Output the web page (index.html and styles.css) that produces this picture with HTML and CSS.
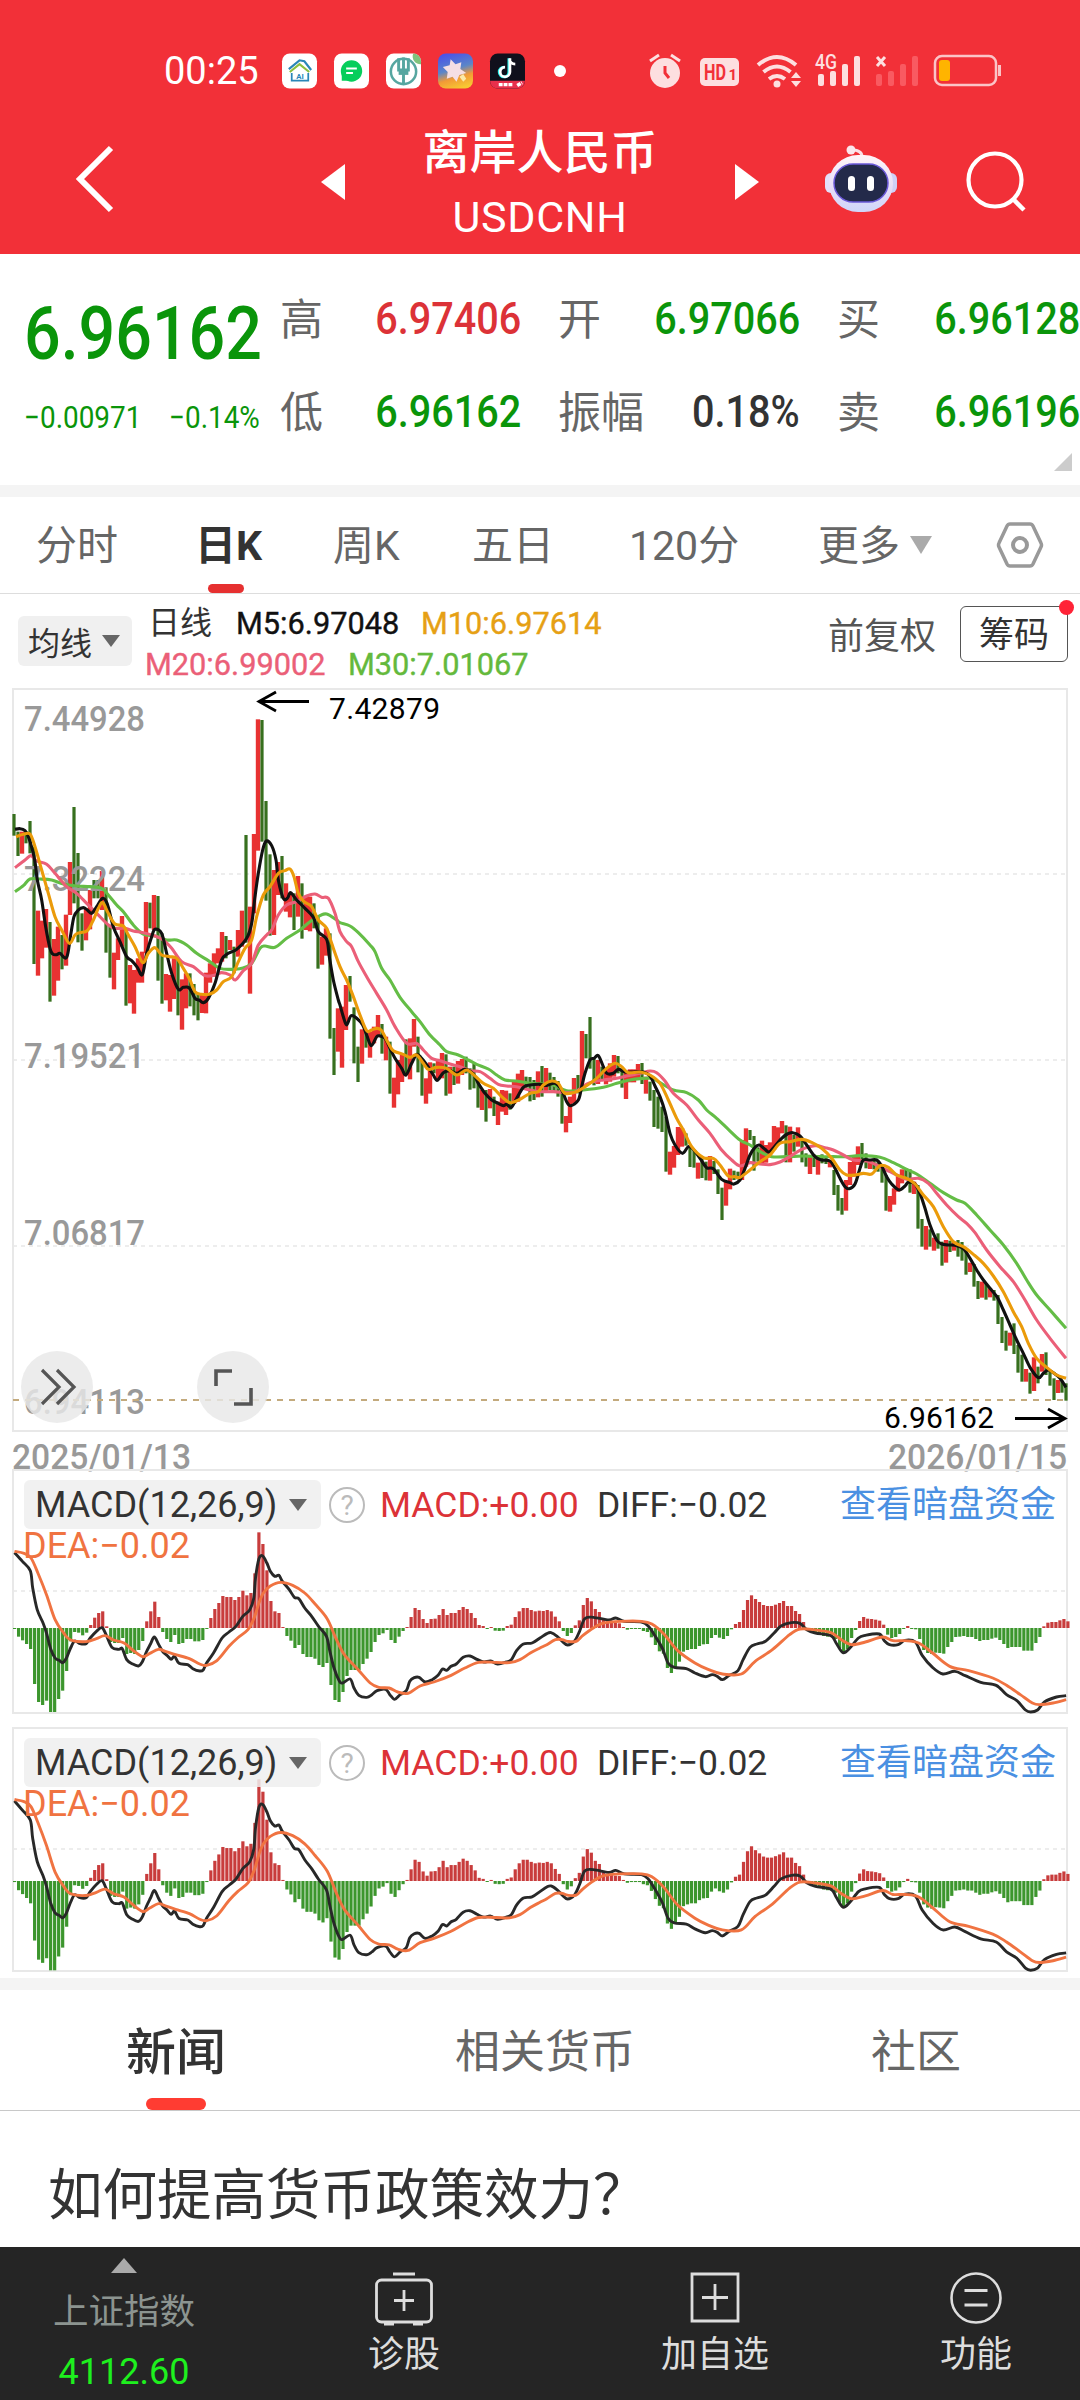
FILE: index.html
```html
<!DOCTYPE html>
<html lang="zh-CN">
<head>
    <meta charset="UTF-8">
    <meta name="viewport" content="width=device-width, initial-scale=1.0">
    <title>离岸人民币 USDCNH</title>
    <link rel="stylesheet" href="styles.css">
</head>
<body>
    <header class="header">
        <div class="status-bar">
            <span class="clock">00:25</span>
            <div class="app-icons">
                <svg class="app" viewBox="0 0 36 36">
                    <rect width="36" height="36" rx="8" fill="#fff"/>
                    <path d="M7 16 18 7l5 1 7 9" fill="none" stroke="#2a86b8" stroke-width="2.2"/>
                    <path d="M8 19 18 11l10 8" fill="none" stroke="#8cbf3f" stroke-width="2.2"/>
                    <path d="M10 20v8h17v-8" fill="none" stroke="#2a86b8" stroke-width="1.8"/>
                    <text x="18.500" y="26" font-size="8" font-weight="bold" fill="#2a86b8" text-anchor="middle">AI</text>
                </svg>
                <svg class="app" viewBox="0 0 36 36">
                    <rect width="36" height="36" rx="8" fill="#fff"/>
                    <circle cx="18" cy="18" r="11" fill="#06ce5b"/>
                    <path d="M8 20v8h9z" fill="#06ce5b"/>
                    <path d="M12.500 15.500h11M12.500 20h7" stroke="#fff" stroke-width="2"/>
                </svg>
                <svg class="app" viewBox="0 0 36 36">
                    <rect width="36" height="36" rx="8" fill="#fff"/>
                    <path d="M28 0a8 8 0 0 1 8 8v3a8 8 0 0 1-8-11z" fill="#7fc27c"/>
                    <circle cx="18" cy="18.500" r="13" fill="none" stroke="#56a6a0" stroke-width="2.600"/>
                    <path d="M13 5v12h10V5M18 4v28" fill="none" stroke="#56a6a0" stroke-width="3"/>
                    <path d="M13 20h10" stroke="#56a6a0" stroke-width="4"/>
                </svg>
                <svg class="app" viewBox="0 0 36 36">
                    <defs>
                        <linearGradient id="sky" x1=".3" y1="0" x2=".6" y2="1">
                            <stop offset="0" stop-color="#4a53e8"/>
                            <stop offset=".45" stop-color="#5b86c8"/>
                            <stop offset=".7" stop-color="#f29a36"/>
                            <stop offset="1" stop-color="#f7c832"/>
                        </linearGradient>
                    </defs>
                    <rect width="36" height="36" rx="8" fill="url(#sky)"/>
                    <path d="m13 6 5 5 6-2-1 7 6 4-7 2-3 7-4-5-6 2 1-7-5-5 7-2z" fill="#f5dfe4"/>
                    <path d="m22 24 4-3 3 5-3 3z" fill="#fbe9a8"/>
                </svg>
                <svg class="app" viewBox="0 0 36 36">
                    <rect width="36" height="36" rx="8" fill="#10101c"/>
                    <path d="M0 28h36a8 8 0 0 1-8 8H8a8 8 0 0 1-8-8z" fill="#e8304c"/>
                    <path d="M19.500 5v14a5 5 0 1 1-5-5" fill="none" stroke="#25f4ee" stroke-width="3"/>
                    <path d="M20.500 5v14a5 5 0 1 1-5-5M20 6q1 5 6 5" fill="none" stroke="#fff" stroke-width="2.800"/>
                    <path d="M9 32h15M28 33l5-3" stroke="#fff" stroke-width="3.500" stroke-dasharray="4 1"/>
                </svg>
            </div>
            <i class="more-dot"></i>
            <svg class="system-icons" width="354" height="36" viewBox="0 0 354 36">
                <g fill="#fddfe0">
                    <circle cx="17" cy="20" r="15"/>
                    <path d="m2 8 9-6M32 8l-9-6" stroke="#fddfe0" stroke-width="3"/>
                    <path d="M17 13v7l4 5" fill="none" stroke="#f23038" stroke-width="3"/>
                    <rect x="52" y="5" width="39" height="28" rx="5"/>
                    <text x="56" y="27" class="hd" textLength="22" lengthAdjust="spacingAndGlyphs">HD</text>
                    <text x="80.500" y="27" class="hd-small">1</text>
                    <circle cx="129" cy="31" r="3.500"/>
                    <path d="M110 12q19-16 38 0M115.500 19q13.500-11 27 0M121 26q8-6 16 0" fill="none" stroke="#fddfe0" stroke-width="4"/>
                    <path d="m143 25 5-6 5 6zM143 28h10l-5 6z"/>
                    <rect x="170" y="21" width="6" height="12" rx="2"/>
                    <rect x="182" y="18" width="6" height="15" rx="2"/>
                    <rect x="194" y="11" width="6" height="22" rx="2"/>
                    <rect x="206" y="3" width="6" height="30" rx="2"/>
                    <text x="167" y="16" class="net" textLength="22" lengthAdjust="spacingAndGlyphs">4G</text>
                </g>
                <path d="m229 4 8 9m0-9-8 9" stroke="#fddfe0" stroke-width="3"/>
                <g fill="#f95a61">
                    <rect x="228" y="21" width="6" height="12" rx="2"/>
                    <rect x="240" y="18" width="6" height="15" rx="2"/>
                    <rect x="252" y="11" width="6" height="22" rx="2"/>
                    <rect x="264" y="3" width="6" height="30" rx="2"/>
                </g>
                <rect x="287" y="3" width="61" height="29" rx="7" fill="none" stroke="#fbc4c7" stroke-width="2.500"/>
                <rect x="291" y="7" width="11" height="21" rx="3" fill="#ffb400"/>
                <path d="M351.500 12v11" stroke="#fbc4c7" stroke-width="3"/>
            </svg>
        </div>
        <div class="title-bar">
            <svg class="back" viewBox="0 0 38 66"><path d="M35 2 4 33l31 31" fill="none" stroke="#fff" stroke-width="6"/></svg>
            <svg class="step prev" viewBox="0 0 24 36"><path d="M24 0v36L0 18z" fill="#fff"/></svg>
            <div class="title">
                <div class="title-name">离岸人民币</div>
                <div class="title-code">USDCNH</div>
            </div>
            <svg class="step next" viewBox="0 0 24 36"><path d="M0 0v36l24-18z" fill="#fff"/></svg>
            <svg class="robot" viewBox="0 0 72 68">
                <defs>
                    <linearGradient id="shell" x1="0" y1="0" x2="0" y2="1">
                        <stop offset="0" stop-color="#fff5f8"/>
                        <stop offset=".6" stop-color="#e6dcf8"/>
                        <stop offset="1" stop-color="#cfd6fa"/>
                    </linearGradient>
                </defs>
                <path d="M37 12q0-7-10-7" fill="none" stroke="#fbdfe6" stroke-width="3"/>
                <circle cx="26" cy="5" r="4.500" fill="#fbe6ec"/>
                <rect x="0" y="28" width="12" height="20" rx="6" fill="#e3e0fa"/>
                <rect x="60" y="28" width="12" height="20" rx="6" fill="#cfd0f8"/>
                <rect x="4" y="10" width="64" height="57" rx="29" fill="url(#shell)"/>
                <rect x="9" y="19" width="54" height="38" rx="19" fill="#232a4a" stroke="#6a58d8" stroke-width="1.500"/>
                <rect x="23" y="31" width="7" height="15" rx="3.500" fill="#fff"/>
                <rect x="42" y="31" width="7" height="15" rx="3.500" fill="#fff"/>
            </svg>
            <svg class="search" viewBox="0 0 62 62"><circle cx="29" cy="29" r="26.500" fill="none" stroke="#fff" stroke-width="4.200"/><path d="m47 48 11 11" stroke="#fff" stroke-width="4.500"/></svg>
        </div>
    </header>

    <section class="quote">
        <div class="quote-main">
            <div class="price"><span>6.96162</span></div>
            <div class="change"><span>−0.00971</span><span>−0.14%</span></div>
        </div>
        <div class="quote-grid">
            <span class="key">高</span><span class="val up">6.97406</span>
            <span class="key">开</span><span class="val down">6.97066</span>
            <span class="key">买</span><span class="val down">6.96128</span>
            <span class="key">低</span><span class="val down">6.96162</span>
            <span class="key">振幅</span><span class="val">0.18%</span>
            <span class="key">卖</span><span class="val down">6.96196</span>
        </div>
        <i class="corner"></i>
    </section>

    <nav class="period-tabs">
        <span class="period p1">分时</span>
        <span class="period p2 active">日K</span>
        <span class="period p3">周K</span>
        <span class="period p4">五日</span>
        <span class="period p5">120分</span>
        <span class="period p6">更多</span>
        <i class="caret caret-light"></i>
        <svg class="setting" viewBox="0 0 48 46"><path d="M14 2h20q2 0 3 2l8 17q1 2 0 4l-8 17q-1 2-3 2H14q-2 0-3-2L3 25q-1-2 0-4l8-17q1-2 3-2z" fill="none" stroke="#999" stroke-width="3.500"/><circle cx="24" cy="23" r="7" fill="none" stroke="#999" stroke-width="4"/></svg>
    </nav>

    <section class="ma-bar">
        <div class="select ma-select">均线<i class="caret"></i></div>
        <div class="ma-values">
            <div class="ma-line"><span class="ma-day">日线</span><span class="num m5">M5:6.97048</span><span class="num m10">M10:6.97614</span></div>
            <div class="ma-line"><span class="num m20">M20:6.99002</span><span class="num m30">M30:7.01067</span></div>
        </div>
        <span class="adjust">前复权</span>
        <span class="chips">筹码</span>
    </section>

    <section class="kline">
        <svg id="kline" width="1080" height="786" viewBox="0 684 1080 786"></svg>
        <div class="round-btn"><svg viewBox="0 0 72 72"><path d="m21 19 17 17-17 17M36 19l17 17-17 17" fill="none" stroke="#555" stroke-width="3.200"/></svg></div>
        <div class="round-btn full"><svg viewBox="0 0 72 72"><path d="M19 35V20h16M54 37v16H37" fill="none" stroke="#555" stroke-width="3.600"/></svg></div>
    </section>

    <section class="macd">
        <svg class="macd-chart" data-scale="1" width="1056" height="245" viewBox="12 -159 1056 245"></svg>
        <div class="macd-head">
            <div class="select macd-select"><span>MACD(12,26,9)</span><i class="caret"></i></div>
            <i class="help">?</i>
            <span class="macd-val">MACD:+0.00</span>
            <span class="diff-val">DIFF:−0.02</span>
            <a class="link">查看暗盘资金</a>
        </div>
        <span class="dea-val">DEA:−0.02</span>
    </section>
    <section class="macd second">
        <svg class="macd-chart" data-scale="1.063" width="1056" height="245" viewBox="12 -154 1056 245"></svg>
        <div class="macd-head">
            <div class="select macd-select"><span>MACD(12,26,9)</span><i class="caret"></i></div>
            <i class="help">?</i>
            <span class="macd-val">MACD:+0.00</span>
            <span class="diff-val">DIFF:−0.02</span>
            <a class="link">查看暗盘资金</a>
        </div>
        <span class="dea-val">DEA:−0.02</span>
    </section>

    <nav class="news-tabs">
        <span class="news-tab active">新闻</span>
        <span class="news-tab">相关货币</span>
        <span class="news-tab">社区</span>
    </nav>
    <h2 class="headline">如何提高货币政策效力？</h2>

    <footer class="toolbar">
        <div class="index">
            <i class="caret-up"></i>
            <span class="index-name">上证指数</span>
            <span class="index-value">4112.60</span>
        </div>
        <div class="tool t1">
            <svg width="58" height="54" viewBox="0 0 58 54"><g fill="none" stroke="#ddd" stroke-width="2.800"><rect x="1.500" y="8" width="55" height="42" rx="5"/><path d="M18 2h22M29 18v21M19 28.500h20"/><path d="M9 52h10M38 52h10"/></g></svg>
            <span>诊股</span>
        </div>
        <div class="tool t2">
            <svg width="58" height="54" viewBox="0 0 58 54"><path d="M6 2h46v47H6zM29 12v26M16 25.500h26" fill="none" stroke="#ddd" stroke-width="2.800"/></svg>
            <span>加自选</span>
        </div>
        <div class="tool t3">
            <svg width="58" height="54" viewBox="0 0 58 54"><circle cx="29" cy="26" r="24.500" fill="none" stroke="#ddd" stroke-width="2.600"/><path d="M17.500 18.500h23M17.500 33h23" stroke="#ddd" stroke-width="2.800"/></svg>
            <span>功能</span>
        </div>
    </footer>
    <script src="chart.js"></script>
</body>
</html>
```

FILE: styles.css
```css
* {
    box-sizing: border-box;
}

body {
    margin: 0;
    width: 1080px;
    height: 2400px;
    overflow: hidden;
    background: #fff;
    color: #333;
    font-family: Roboto, "Noto Sans CJK SC", sans-serif;
    display: flex;
    flex-direction: column;
}

i {
    font-style: normal;
}

svg {
    display: block;
    flex: none;
    overflow: visible;
}

span {
    white-space: nowrap;
    flex: none;
}

/* header */
.header {
    height: 254px;
    flex: none;
    background: #f23038;
    color: #fff;
}

.status-bar {
    height: 126px;
    padding: 53px 0 0 164px;
    display: flex;
    align-items: flex-start;
}

.clock {
    width: 118px;
    font-size: 38px;
    line-height: 36px;
}

.app-icons {
    display: flex;
    gap: 17px;
}

.app {
    width: 35px;
    height: 36px;
}

.more-dot {
    width: 12px;
    height: 12px;
    margin: 12px 0 0 29px;
    border-radius: 50%;
    background: #fff;
}

.system-icons {
    margin-left: 82px;
}

.hd {
    font: bold 22px Roboto, sans-serif;
    fill: #f23038;
}

.hd-small {
    font: bold 15px Roboto, sans-serif;
    fill: #f23038;
}

.net {
    font: 500 21px Roboto, sans-serif;
}

.title-bar {
    display: flex;
    height: 128px;
    align-items: flex-start;
}

.back {
    width: 38px;
    height: 66px;
    margin: 20px 0 0 76px;
}

.step {
    width: 24px;
    height: 36px;
    margin-top: 38px;
}

.prev {
    margin-left: 207px;
}

.title {
    width: 390px;
    text-align: center;
    font-weight: 500;
}

.title-name {
    font-size: 47px;
    line-height: 54px;
}

.title-code {
    font-size: 43px;
    font-weight: 400;
    line-height: 50px;
    margin-top: 12px;
    letter-spacing: 0.7px;
}

.robot {
    width: 72px;
    height: 68px;
    margin: 19px 0 0 66px;
}

.search {
    width: 62px;
    height: 62px;
    margin: 25px 0 0 69px;
}

/* quote */
.quote {
    position: relative;
    height: 243px;
    flex: none;
    display: flex;
    border-bottom: 12px solid #f4f4f4;
}

.quote-main {
    width: 280px;
    flex: none;
    padding: 34px 0 0 24px;
    color: #0a950a;
}

.price {
    height: 90px;
    font-size: 75px;
    line-height: 90px;
    font-weight: 500;
}

.price span,
.change span,
.val,
.num {
    display: inline-block;
    transform: scaleX(.86);
    transform-origin: left;
}

.change {
    display: flex;
    font-size: 31px;
    line-height: 36px;
    margin-top: 22px;
}

.change span {
    width: 145px;
    transform: scaleX(.9);
}

.quote-grid {
    display: grid;
    grid-template-columns: 96px 145px 134px 145px 135px 145px;
    grid-template-rows: 93px 93px;
    align-items: center;
    padding-top: 18px;
    height: 204px;
}

.key {
    color: #666;
    font-size: 43px;
    margin-top: -6px;
}

.key:nth-child(4n + 3),
.key:nth-child(5),
.key:nth-child(9) {
    padding-left: 37px;
}

.key:nth-child(7) {
    padding-left: 0;
}

.val {
    font-size: 44px;
    font-weight: 500;
    justify-self: end;
    transform: scaleX(.9);
    transform-origin: right;
}

.up {
    color: #dc3237;
}

.down {
    color: #0a950a;
}

.corner {
    position: absolute;
    right: 8px;
    bottom: 14px;
    border-left: 18px solid transparent;
    border-bottom: 18px solid #ccc;
}

/* period tabs */
.period-tabs {
    height: 97px;
    flex: none;
    display: flex;
    align-items: center;
    border-bottom: 1px solid #ddd;
    color: #666;
    font-size: 41px;
}

.period {
    position: relative;
    height: 96px;
    line-height: 99px;
}

.p1 { margin-left: 36px; width: 159px; }
.p2 { width: 138px; }
.p3 { width: 139px; }
.p4 { width: 157px; }
.p5 { width: 189px; }
.p6 { width: 92px; }

.period.active {
    color: #333;
    font-weight: bold;
}

.period.active::after {
    content: "";
    position: absolute;
    left: 13px;
    bottom: 0;
    width: 36px;
    height: 9px;
    border-radius: 5px;
    background: #e63030;
}

.caret {
    border: 9px solid transparent;
    border-top: 12px solid #666;
    border-bottom: 0;
}

.caret-light {
    border-width: 18px 11px 0;
    border-top-color: #aaa;
}

.setting {
    width: 48px;
    height: 46px;
    margin-left: 64px;
}

/* MA row */
.ma-bar {
    height: 90px;
    flex: none;
    padding-left: 18px;
    display: flex;
    align-items: flex-start;
}

.select {
    display: flex;
    align-items: center;
    justify-content: space-between;
    border-radius: 6px;
    background: #f0f0f0;
    color: #333;
}

.ma-select {
    width: 114px;
    height: 50px;
    margin-top: 22px;
    padding: 0 12px 0 10px;
    font-size: 32px;
}

.ma-values {
    width: 697px;
    padding: 9px 0 0 13px;
}

.ma-line {
    display: flex;
    height: 41px;
    line-height: 41px;
    font-size: 32px;
}

.ma-day {
    width: 91px;
    padding-left: 3px;
    font-size: 32px;
    line-height: 40px;
}

.num {
    transform: scaleX(.96);
    font-size: 32px;
    -webkit-text-stroke: .4px currentColor;
}

.m5 { color: #111; width: 185px; }
.m10 { color: #e6a014; }
.m20 { color: #eb5f78; width: 203px; }
.m30 { color: #64b93c; }

.adjust {
    width: 132px;
    margin-top: 18px;
    font-size: 36px;
    line-height: 51px;
    color: #555;
}

.ma-bar .adjust {
    margin-left: -1px;
}

.chips {
    position: relative;
    width: 108px;
    height: 56px;
    margin-top: 12px;
    border: 1px solid #555;
    border-radius: 6px;
    font-size: 35px;
    line-height: 57px;
    text-align: center;
}

.chips::after {
    content: "";
    position: absolute;
    top: -7px;
    right: -7px;
    width: 15px;
    height: 15px;
    border-radius: 50%;
    background: #ff2337;
}

/* candles */
.kline {
    position: relative;
    height: 785px;
    flex: none;
}

.axis {
    font: 500 35px Roboto, sans-serif;
    fill: #999;
}

.mark {
    font: 30px Roboto, sans-serif;
    fill: #000;
}

.round-btn {
    position: absolute;
    left: 21px;
    top: 667px;
    width: 72px;
    height: 72px;
    border-radius: 50%;
    background: rgba(232, 232, 232, .82);
}

.round-btn.full {
    left: 197px;
}

/* MACD */
.macd {
    position: relative;
    height: 245px;
    margin: 0 12px;
    flex: none;
}

.macd.second {
    margin-top: 13px;
}

.macd-chart {
    position: absolute;
    left: 0;
    top: 0;
}

.macd-head {
    position: relative;
    display: flex;
    align-items: center;
    padding: 11px 0 0 12px;
    height: 60px;
}

.macd-select {
    width: 297px;
    height: 49px;
    padding: 0 14px 0 11px;
    font-size: 36px;
    background: rgba(238, 238, 238, .85);
}

.help {
    width: 36px;
    height: 36px;
    margin-left: 8px;
    border: 2px solid #bbb;
    border-radius: 50%;
    color: #bbb;
    font-size: 28px;
    line-height: 33px;
    text-align: center;
}

.macd-val {
    width: 217px;
    margin-left: 15px;
    font-size: 35.5px;
    color: #dc3237;
}

.diff-val {
    width: 243px;
    font-size: 35.5px;
}

.link {
    font-size: 36px;
    line-height: 52px;
    color: #4a90e2;
}

.dea-val {
    position: relative;
    display: block;
    padding-left: 11px;
    font-size: 36px;
    line-height: 34px;
    color: #f07341;
}

/* news */
.news-tabs {
    display: flex;
    height: 133px;
    margin-top: 6px;
    flex: none;
    border-top: 12px solid #f4f4f4;
    border-bottom: 1px solid #c8c8c8;
}

.news-tab {
    text-align: center;
    line-height: 125px;
    font-size: 45px;
    color: #666;
}

.news-tab:first-child { flex: 0 0 352px; }
.news-tab:nth-child(2) { flex: 0 0 386px; }
.news-tab:nth-child(3) { flex: 0 0 356px; }

.news-tab.active {
    position: relative;
    color: #333;
    font-size: 50px;
    font-weight: 500;
    line-height: 126px;
}

.news-tab.active::after {
    content: "";
    position: absolute;
    left: 146px;
    bottom: 0;
    width: 60px;
    height: 12px;
    border-radius: 6px;
    background: #ff3c32;
}

.headline {
    margin: 0;
    padding-left: 48px;
    height: 136px;
    flex: none;
    line-height: 168px;
    font-size: 54.5px;
    font-weight: 400;
}

/* toolbar */
.toolbar {
    display: flex;
    height: 153px;
    flex: none;
    background: #252525;
    color: #ddd;
}

.index {
    width: 248px;
    display: flex;
    flex-direction: column;
    align-items: center;
    padding: 11px 0 0 0;
}

.caret-up {
    border: 13px solid transparent;
    border-bottom: 15px solid #aaa;
    border-top: 0;
}

.index-name {
    margin-top: 14px;
    font-size: 35.5px;
    line-height: 50px;
    color: #8c9490;
}

.index-value {
    margin-top: 13px;
    font-size: 36px;
    line-height: 44px;
    color: #1ef01e;
}

.tool {
    display: flex;
    flex-direction: column;
    align-items: center;
    padding-top: 25px;
    width: 120px;
    font-size: 36px;
    line-height: 50px;
}

.tool span { margin-top: 4px; }

.t1 { margin-left: 96px; }
.t2 { margin-left: 191px; }
.t3 { margin-left: 141px; }
```

FILE: chart.js
```js
const NS = 'http://www.w3.org/2000/svg';

function add(svg, tag, attrs, text) {
    const el = document.createElementNS(NS, tag);
    for (const k in attrs) el.setAttribute(k, attrs[k]);
    if (text) el.textContent = text;
    svg.appendChild(el);
    return el;
}

// smooth curve through all points
function curve(pts) {
    let d = `M${pts[0][0]} ${pts[0][1]}`;
    for (let i = 0; i < pts.length - 1; i++) {
        const a = pts[i - 1] || pts[i], b = pts[i], c = pts[i + 1], e = pts[i + 2] || c;
        d += `C${b[0] + (c[0] - a[0]) / 6} ${b[1] + (c[1] - a[1]) / 6} ${c[0] - (e[0] - b[0]) / 6} ${c[1] - (e[1] - b[1]) / 6} ${c[0]} ${c[1]}`;
    }
    return d;
}

// candles are stored in three blocks: high-low in thirds of a pixel from the block top
const blocks = [
    { x: 0, y: 680, bars: `g402-467 g455-528 r455-521 g455-490 g423-520 g500-852 r692-887 r722-835 r687-803 g726-965
        r777-947 r740-902 g765-868 r704-857 r546-705 g381-670 g519-787 g700-812 r685-781 r630-748 g600-655 g600-655
        r573-690 g622-818 g734-893 r818-928 r775-840 r708-800 g745-977 r855-970 r870-1001 r835-908 r815-908 r666-820
        g668-745 r645-750 g648-902 g760-971 r882-961 r885-995 r835-957 g840-1006 r898-1049 r880-985 g880-979 g912-1006
        g940-1021 r945-999 r878-1000 r850-908 r820-890 r805-850 r756-845 g768-835 r780-810 g800-880 r750-830 r692-800
        g465-788 r680-941 r462-700 r118-512 g120-485 g363-662 g523-767 r570-765 r546-645 g528-655 r610-695 r645-712
        g640-750 r588-710 g610-776 r650-750 r650-754 g670-745 g710-866 r770-854 r745-827 g760-1076 g1044-1185
        r985-1115 r980-1163 r915-1050 g888-965 g982-1150` },
    { x: 340, y: 900, bars: `g440-546 r388-491 g395-443 r395-473 r380-430 r345-410 g372-461 r410-481 g425-581 r533-623
        r480-583 r460-546 g418-520 r415-538 r357-440 g410-517 g480-587 r535-611 r487-581 g490-520 r480-540 r459-535
        g463-587 r500-581 g500-555 r483-551 r477-525 g470-520 g505-569 g490-565 g540-623 r570-630 g570-665 r567-625
        g590-648 r605-675 r570-635 r572-645 g580-629 r545-612 r521-605 r510-570 g530-570 g531-604 g540-600 r514-592
        g498-590 r504-575 g518-570 g531-575 g543-590 g570-671 r648-697 r590-669 r534-610 g525-580 r393-560 g402-475
        g351-506 g476-556 r480-552 g500-540 r505-553 r490-545 r465-530 g468-520 g505-563 r515-597 r508-547 r508-547
        r492-537 g489-552 r530-581 g545-602 g570-681 g590-686 g620-696 g650-815 r755-824 r738-803 r681-765 r684-740
        g700-737 g740-801 g750-803 r788-836 g775-834 g785-841 r768-842 g783-822 g808-882 g863-960 r845-917 r806-868
        g812-840 g815-838` },
    { x: 700, y: 1060, bars: `r240-360 r205-320 g210-240 g228-332 g262-305 r242-310 r255-308 r247-285 r198-270 r202-250
        r183-220 g196-307 r200-307 g225-275 r202-260 g243-307 g280-320 r285-342 g283-321 r287-344 g283-310 g290-312
        r300-322 g330-405 g375-452 g414-464 r360-452 r306-375 r290-350 r259-315 g249-305 g280-325 r297-327 g300-328
        g307-335 g320-368 g345-452 r408-455 r385-434 r345-395 r328-370 g325-360 g328-398 r365-402 g375-506 g477-560
        r498-569 g508-560 r533-572 g520-566 g545-617 r540-608 g542-576 r545-572 g540-590 g546-602 g570-644 r608-636
        g612-680 g663-717 r665-713 g670-719 r685-712 g690-722 g705-792 g771-849 g812-872 r818-857 g790-882 g855-938
        g884-965 r927-965 g938-1001 r892-993 g920-970 r882-935 g877-945 g930-977 g955-1020 r960-999 g962-998 g970-1022` }
];

// moving averages, one string per block
const averages = [
    ['#64bd46', [
        '45,635 70,617 90,597 120,597 155,600 190,612 230,618 270,620 305,625 325,645 350,675 370,695 400,735 430,762 465,768 500,780 530,780 560,795 590,820 625,842 660,865 695,868 725,865 755,850 780,805 795,798 825,802 860,775 900,750 930,725 960,707 980,702 1010,720',
        '0,68 30,78 55,98 90,135 105,155 125,205 150,240 180,292 215,335 240,365 270,405 300,435 320,455 355,465 385,480 410,493 445,507 470,525 495,540 530,543 570,550 610,552 640,555 680,572 730,570 790,562 830,550 870,540 900,536 935,535 960,548 1000,570 1040,578 1075,600 1100,630 1130,655 1165,688',
        '120,240 150,255 180,275 215,290 260,290 310,288 360,290 400,290 440,290 480,287 540,292 580,308 620,328 650,342 690,370 730,398 770,420 795,430 830,465 870,510 910,555 950,610 980,660 1010,705 1050,750 1098,805']],
    ['#eb5f78', [
        '45,563 75,540 93,527 110,543 140,553 165,580 200,620 230,640 260,670 290,700 325,735 345,745 375,745 400,753 430,758 465,768 490,780 515,805 545,845 580,860 615,887 645,885 665,878 690,885 706,900 730,872 755,850 775,795 800,765 815,750 835,705 860,675 890,665 920,648 945,642 965,652 985,655 1005,700',
        '0,95 20,125 35,140 55,185 80,230 110,280 140,330 165,380 200,430 230,430 250,450 275,475 300,482 330,492 360,500 390,512 420,515 450,535 475,553 500,558 530,560 560,568 600,575 640,575 700,578 725,562 750,548 790,540 830,535 860,528 900,520 930,513 950,518 975,543 1000,580 1040,615 1075,660 1110,700 1145,750 1175,780',
        '120,318 150,308 180,312 210,314 240,306 270,290 305,268 345,257 375,263 400,270 430,285 460,300 500,303 530,315 560,330 590,345 620,358 655,355 685,370 710,400 740,435 775,470 800,490 825,518 860,570 900,620 940,665 975,720 1010,780 1050,835 1098,895']],
    ['#111', [
        '45,448 60,446 75,452 85,470 96,505 105,545 112,600 125,660 137,740 150,805 158,822 170,824 180,820 200,832 212,765 222,710 235,690 250,683 262,690 275,700 290,680 308,655 322,672 340,740 360,785 380,830 395,842 412,862 427,884 440,820 455,770 465,748 485,760 500,820 515,880 535,928 550,922 568,924 585,955 597,960 610,968 625,955 645,910 665,840 685,820 710,808 740,775 755,730 765,650 775,580 788,510 799,483 815,497 828,540 835,600 850,655 862,655 872,638 890,660 915,685 940,712 955,755 980,778 988,830 1000,900 1015,960',
        '0,315 10,350 20,375 33,347 50,355 68,375 80,405 94,437 110,410 120,408 135,415 150,445 165,475 185,505 198,525 215,490 230,463 245,475 262,497 280,525 292,541 310,518 330,512 350,520 375,508 400,522 415,550 435,580 455,600 475,610 490,617 500,613 514,622 530,595 550,562 570,555 600,553 620,556 645,550 665,570 680,605 692,617 715,600 725,560 735,520 750,480 762,475 775,467 790,500 800,520 820,520 835,508 855,516 880,516 910,516 930,528 945,558 960,590 975,635 990,700 1005,735 1027,760 1045,740 1060,748 1080,775 1100,803 1120,806 1145,838 1170,848 1182,852',
        '120,360 135,325 150,285 165,262 178,255 195,268 208,276 225,258 245,235 262,222 278,218 300,228 320,255 345,290 365,300 390,303 405,325 420,355 435,380 448,386 465,372 480,325 490,300 510,300 530,300 545,318 560,350 575,372 597,390 615,378 625,367 645,372 660,400 675,445 690,495 710,540 725,552 745,555 765,556 790,566 810,595 830,630 850,660 870,685 892,712 910,750 930,795 950,840 970,880 990,922 1015,953 1030,940 1045,930 1065,942 1080,955 1098,982']],
    ['#eb9b0a', [
        '48,470 70,463 90,462 105,500 125,570 145,640 165,710 185,750 208,790 225,765 240,758 262,752 280,720 295,685 308,668 325,700 345,732 370,738 385,765 405,800 428,848 445,820 465,803 485,825 510,830 530,835 550,865 570,900 585,935 605,943 630,942 650,930 670,905 695,890 715,845 735,805 755,780 770,710 790,645 810,620 835,580 855,572 870,567 882,590 895,640 912,665 935,680 955,720 980,745 995,790',
        '0,200 20,240 40,290 60,345 80,392 95,390 110,385 125,392 145,430 160,452 190,463 210,472 230,465 250,490 265,508 290,502 320,505 350,525 380,510 405,528 430,550 460,565 485,590 510,608 540,598 570,580 595,575 610,555 635,543 655,550 675,580 710,575 735,560 770,535 800,505 825,490 845,500 865,518 900,516 930,525 960,550 985,600 1010,655 1030,690 1055,740 1090,773 1120,775 1140,795 1165,828 1185,830',
        '120,352 150,330 180,305 210,285 240,250 270,245 305,238 335,247 365,265 395,295 420,330 440,345 465,345 490,340 515,342 540,317 565,322 590,345 620,355 645,372 670,405 700,440 730,500 760,545 790,560 820,583 850,610 880,648 910,695 940,755 965,800 985,850 1010,895 1040,922 1070,945 1098,955']]
];

function drawKline() {
    const svg = document.getElementById('kline');
    add(svg, 'rect', { x: 13, y: 689, width: 1054, height: 742, fill: 'none', stroke: '#e8e8e8', 'stroke-width': 2 });
    [874, 1060, 1246].forEach(y => add(svg, 'path', { d: `M13 ${y}H1067`, stroke: '#e8e8e8', 'stroke-width': 1.5, 'stroke-dasharray': '4 4' }));
    const axis = (t, y) => add(svg, 'text', { x: 24, y, class: 'axis', textLength: 121, lengthAdjust: 'spacingAndGlyphs' }, t);
    axis('7.44928', 731);
    axis('7.19521', 1068);
    axis('7.06817', 1245);

    let x = 14;
    blocks.forEach(b => b.bars.split(/\s+/).forEach(s => {
        const [hi, lo] = s.slice(1).split('-').map(Number);
        const w = s[0] === 'r' ? 4.4 : 3.2;
        add(svg, 'rect', { x: x - w / 2, y: b.y + hi / 3, width: w, height: (lo - hi) / 3, fill: s[0] === 'r' ? '#e83232' : '#37701e' });
        x += 4;
    }));
    axis('7.32224', 891);
    averages.forEach(([color, parts]) => {
        const pts = parts.flatMap((p, i) => p.split(' ').map(q => {
            const [px, py] = q.split(',').map(Number);
            return [blocks[i].x + px / 3, blocks[i].y + py / 3];
        }));
        add(svg, 'path', { d: curve(pts), fill: 'none', stroke: color, 'stroke-width': 3.1 });
    });
    axis('6.94113', 1414);
    add(svg, 'path', { d: 'M13 1400H1067', stroke: '#c3aa7d', 'stroke-width': 1.8, 'stroke-dasharray': '6 6' });

    add(svg, 'path', { d: 'M309 701.500H259M276 692l-17 9.500 17 9.500', fill: 'none', stroke: '#000', 'stroke-width': 2.8 });
    add(svg, 'text', { x: 329, y: 719, class: 'mark', textLength: 111 }, '7.42879');
    add(svg, 'path', { d: 'M1015 1418.500H1065M1048 1409l17 9.500-17 9.500', fill: 'none', stroke: '#000', 'stroke-width': 2.8 });
    add(svg, 'text', { x: 884, y: 1428, class: 'mark', textLength: 110 }, '6.96162');
    add(svg, 'text', { x: 12, y: 1469, class: 'axis', textLength: 179, lengthAdjust: 'spacingAndGlyphs' }, '2025/01/13');
    add(svg, 'text', { x: 888, y: 1469, class: 'axis', textLength: 179, lengthAdjust: 'spacingAndGlyphs' }, '2026/01/15');
}

const hist = [
    -3, -26, -37, -48, -63, -168, -222, -231, -218, -252, -252, -213, -188, -129, -40, -12, -14, -22, -14, 9,
    31, 45, 50, 5, -42, -45, -45, -30, -78, -75, -78, -66, -39, 20, 50, 79, 33, -12, -33, -42,
    -21, -48, -45, -33, -33, -40, -40, -36, -3, 30, 57, 75, 96, 93, 93, 84, 93, 112, 98, 105,
    164, 287, 252, 173, 81, 50, 45, 3, -24, -38, -60, -51, -78, -87, -87, -92, -111, -117, -105, -171,
    -216, -222, -192, -144, -126, -126, -126, -108, -92, -72, -42, -21, -16, -6, -36, -45, -26, -9, 3, 33,
    60, 54, 27, 15, 27, 28, 39, 57, 39, 45, 45, 54, 63, 57, 45, 30, 9, 6, -2, 3,
    -8, -9, -8, 6, 10, 33, 50, 60, 60, 54, 50, 52, 51, 54, 50, 34, 20, -9, -24, -15,
    8, 23, 69, 90, 80, 57, 48, 25, 20, 17, 15, 14, 3, -5, -3, -3, -3, -9, -12, -28,
    -51, -70, -77, -120, -135, -117, -101, -71, -66, -63, -63, -54, -49, -48, -30, -21, -29, -33, -24, -4,
    12, 18, 54, 84, 98, 87, 78, 69, 66, 66, 70, 75, 81, 66, 66, 51, 42, 18, -4, -12,
    -14, -17, -24, -26, -27, -33, -60, -72, -63, -30, -6, 21, 33, 28, 27, 25, 22, 10, -20, -30,
    -27, -18, -3, 6, -3, -4, -33, -66, -75, -78, -74, -75, -77, -57, -42, -27, -26, -24, -27, -27,
    -33, -39, -36, -36, -32, -29, -36, -48, -60, -57, -57, -57, -68, -68, -68, -45, -27, 5, 16, 18,
    18, 23, 27, 20
];
const diff = '42,-226 65,-200 88,-172 95,-120 108,-55 125,-15 135,15 147,62 160,90 172,97 182,104 193,90 205,60 217,39 232,47 250,47 262,30 280,10 296,-1 308,20 325,58 345,64 355,62 368,95 385,108 402,114 413,102 425,72 437,48 448,27 460,48 472,70 485,82 497,94 507,85 520,106 545,110 560,122 580,129 590,126 600,105 620,75 645,30 665,12 685,-5 705,-35 725,-54 737,-90 742,-150 752,-208 763,-216 775,-195 785,-170 798,-155 810,-158 820,-140 840,-115 855,-92 868,-88 885,-60 905,-35 925,-5 948,25 958,70 970,120 985,158 995,165 1017,153 1028,180 1042,202 1065,208 1080,200 1095,188 1120,184 1132,200 1146,214 1162,200 1180,188 1190,160 1203,149 1217,148 1235,162 1255,155 1272,142 1285,123 1297,127 1310,115 1325,108 1345,88 1365,84 1385,94 1405,102 1425,99 1445,108 1470,102 1485,95 1500,68 1520,48 1545,45 1568,30 1588,17 1600,14 1618,25 1633,40 1648,51 1668,40 1683,10 1698,-28 1723,-32 1768,-24 1788,-30 1813,-20 1863,-18 1883,-5 1903,25 1923,60 1940,105 1958,118 1993,122 2018,135 2048,146 2068,140 2083,145 2098,155 2118,142 2143,128 2158,95 2178,58 2198,48 2223,40 2248,15 2268,-6 2298,-16 2323,-14 2343,5 2368,15 2413,23 2428,45 2448,74 2468,60 2493,30 2513,22 2553,18 2568,38 2583,50 2608,50 2628,37 2658,42 2678,82 2708,118 2738,138 2773,130 2803,143 2848,163 2893,172 2923,200 2953,218 2978,246 2993,252 3013,246 3033,222 3068,207 3096,203';
const dea = '42,-230 70,-224 90,-210 110,-165 135,-100 160,-25 185,15 205,36 250,41 280,32 305,23 330,36 360,45 385,66 415,86 435,76 460,64 480,70 510,80 550,92 580,108 600,112 630,98 665,55 690,30 720,5 738,-30 752,-75 765,-105 785,-126 815,-137 850,-128 885,-105 915,-72 950,-28 975,30 1000,80 1040,125 1075,165 1100,178 1130,180 1155,192 1185,196 1220,174 1260,162 1310,142 1350,120 1390,103 1440,103 1480,104 1510,95 1540,75 1568,60 1588,50 1613,35 1633,35 1648,40 1673,40 1693,22 1723,0 1753,-15 1803,-20 1863,-20 1893,-12 1928,18 1968,68 2018,105 2058,125 2098,138 2153,138 2193,100 2243,65 2293,20 2323,3 2363,5 2413,14 2443,35 2473,50 2513,42 2563,27 2593,38 2628,38 2668,45 2708,75 2758,115 2813,128 2883,150 2923,172 2963,200 2998,225 3018,230 3058,225 3096,215';

function drawMacd(svg) {
    const k = Number(svg.dataset.scale) / 3;
    const top = Number(svg.getAttribute('viewBox').split(' ')[1]);
    add(svg, 'rect', { x: 13, y: top + 1, width: 1054, height: 243, fill: 'none', stroke: '#e8e8e8', 'stroke-width': 2 });
    const mid = top === -159 ? -37 : -32;
    add(svg, 'path', { d: `M13 ${mid}H1067`, stroke: '#e8e8e8', 'stroke-width': 1.5, 'stroke-dasharray': '4 4' });
    hist.forEach((v, i) => {
        const h = Math.abs(v) * k;
        add(svg, 'rect', { x: 13 + i * 4.005, y: v > 0 ? -h : 0, width: 3.2, height: Math.max(h, 1), fill: v > 0 ? '#c83c3c' : '#3c962d' });
    });
    [[diff, '#282828'], [dea, '#f07341']].forEach(([src, color]) => {
        const pts = src.split(' ').map(q => {
            const [px, py] = q.split(',').map(Number);
            return [px / 2.904, py * k];
        });
        add(svg, 'path', { d: curve(pts), fill: 'none', stroke: color, 'stroke-width': 2.9 });
    });
}

drawKline();
document.querySelectorAll('.macd-chart').forEach(drawMacd);
```
